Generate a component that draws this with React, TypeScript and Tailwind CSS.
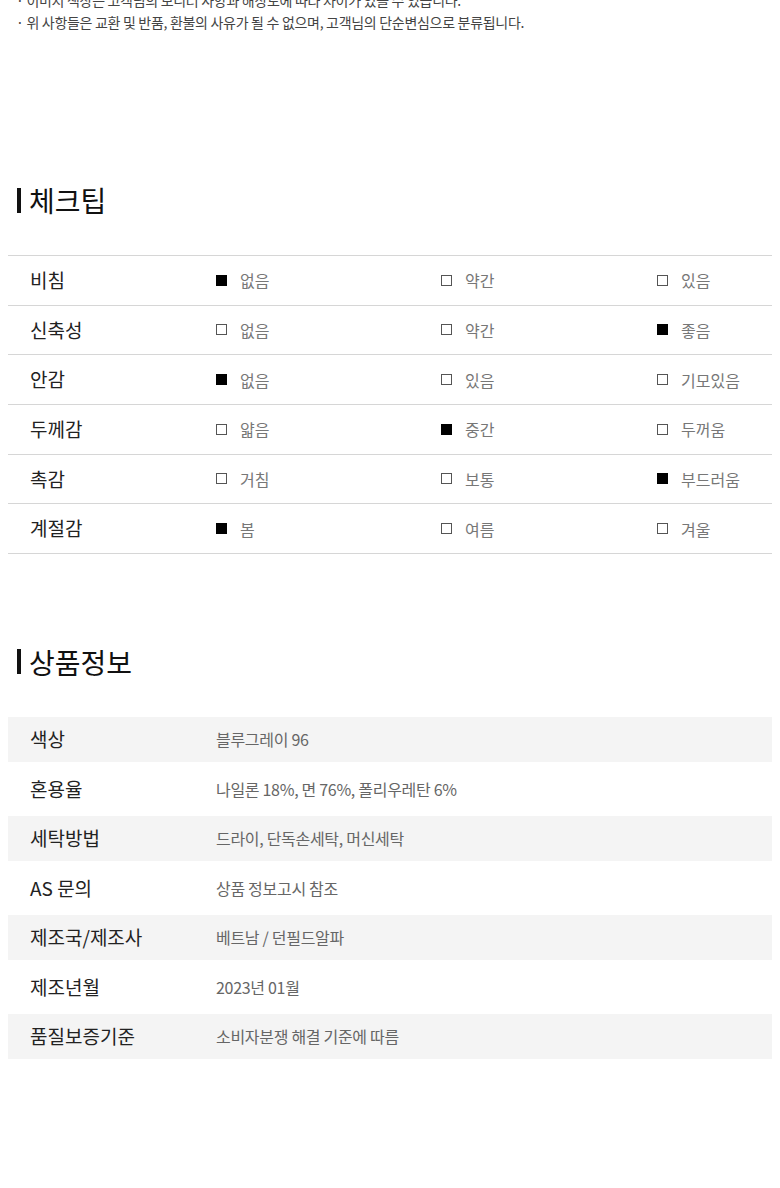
const checkRows: { label: string; opts: string[]; on: number }[] = [
  { label: "비침", opts: ["없음", "약간", "있음"], on: 0 },
  { label: "신축성", opts: ["없음", "약간", "좋음"], on: 2 },
  { label: "안감", opts: ["없음", "있음", "기모있음"], on: 0 },
  { label: "두께감", opts: ["얇음", "중간", "두꺼움"], on: 1 },
  { label: "촉감", opts: ["거침", "보통", "부드러움"], on: 2 },
  { label: "계절감", opts: ["봄", "여름", "겨울"], on: 0 },
];

const infoRows: [string, string][] = [
  ["색상", "블루그레이 96"],
  ["혼용율", "나일론 18%, 면 76%, 폴리우레탄 6%"],
  ["세탁방법", "드라이, 단독손세탁, 머신세탁"],
  ["AS 문의", "상품 정보고시 참조"],
  ["제조국/제조사", "베트남 / 던필드알파"],
  ["제조년월", "2023년 01월"],
  ["품질보증기준", "소비자분쟁 해결 기준에 따름"],
];

const Heading = ({ children }: { children: string }) => (
  <div className="flex items-center pl-[17px]">
    <div className="w-[4px] h-[25px] bg-[#111]" />
    <h2 className="ml-[8px] text-[28px] leading-none font-normal text-[#111]">
      {children}
    </h2>
  </div>
);

const Box = ({ on }: { on: boolean }) =>
  on ? (
    <span className="inline-block w-[11px] h-[11px] bg-black" />
  ) : (
    <span className="inline-block w-[11px] h-[11px] border border-[#555] bg-white" />
  );

export default function App() {
  return (
    <div
      className="w-[780px] h-[1188px] overflow-hidden bg-white"
      style={{ fontFamily: '"Noto Sans CJK KR", "Noto Sans", sans-serif' }}
    >
      <div className="-mt-[11px] pl-[16px] text-[14px] leading-[22px] text-[#444] tracking-[-0.3px]">
        <p>· 이미지 색상은 고객님의 모니터 사양과 해상도에 따라 차이가 있을 수 있습니다.</p>
        <p>· 위 사항들은 교환 및 반품, 환불의 사유가 될 수 없으며, 고객님의 단순변심으로 분류됩니다.</p>
      </div>

      <div className="mt-[153px]">
        <Heading>체크팁</Heading>
      </div>

      <div className="mx-[8px] mt-[41px] border-t border-[#d6d6d6]">
        {checkRows.map((r) => (
          <div
            key={r.label}
            className="h-[49.67px] border-b border-[#d6d6d6] grid grid-cols-[208px_225px_216px_1fr] items-center"
          >
            <div className="pl-[22px] text-[19px] text-[#222]">{r.label}</div>
            {r.opts.map((o, i) => (
              <div key={o} className="flex items-center gap-[13px]">
                <Box on={i === r.on} />
                <span className="text-[16px] text-[#777]">{o}</span>
              </div>
            ))}
          </div>
        ))}
      </div>

      <div className="mt-[94px]">
        <Heading>상품정보</Heading>
      </div>

      <div className="mx-[8px] mt-[41px] flex flex-col gap-[4.5px]">
        {infoRows.map(([k, v], i) => (
          <div
            key={k}
            className={`h-[45px] flex items-center ${i % 2 === 0 ? "bg-[#f4f4f4]" : "bg-white"}`}
          >
            <div className="w-[208px] pl-[22px] text-[19px] text-[#222]">{k}</div>
            <div className="text-[16px] text-[#666] tracking-[-0.3px]">{v}</div>
          </div>
        ))}
      </div>
    </div>
  );
}
